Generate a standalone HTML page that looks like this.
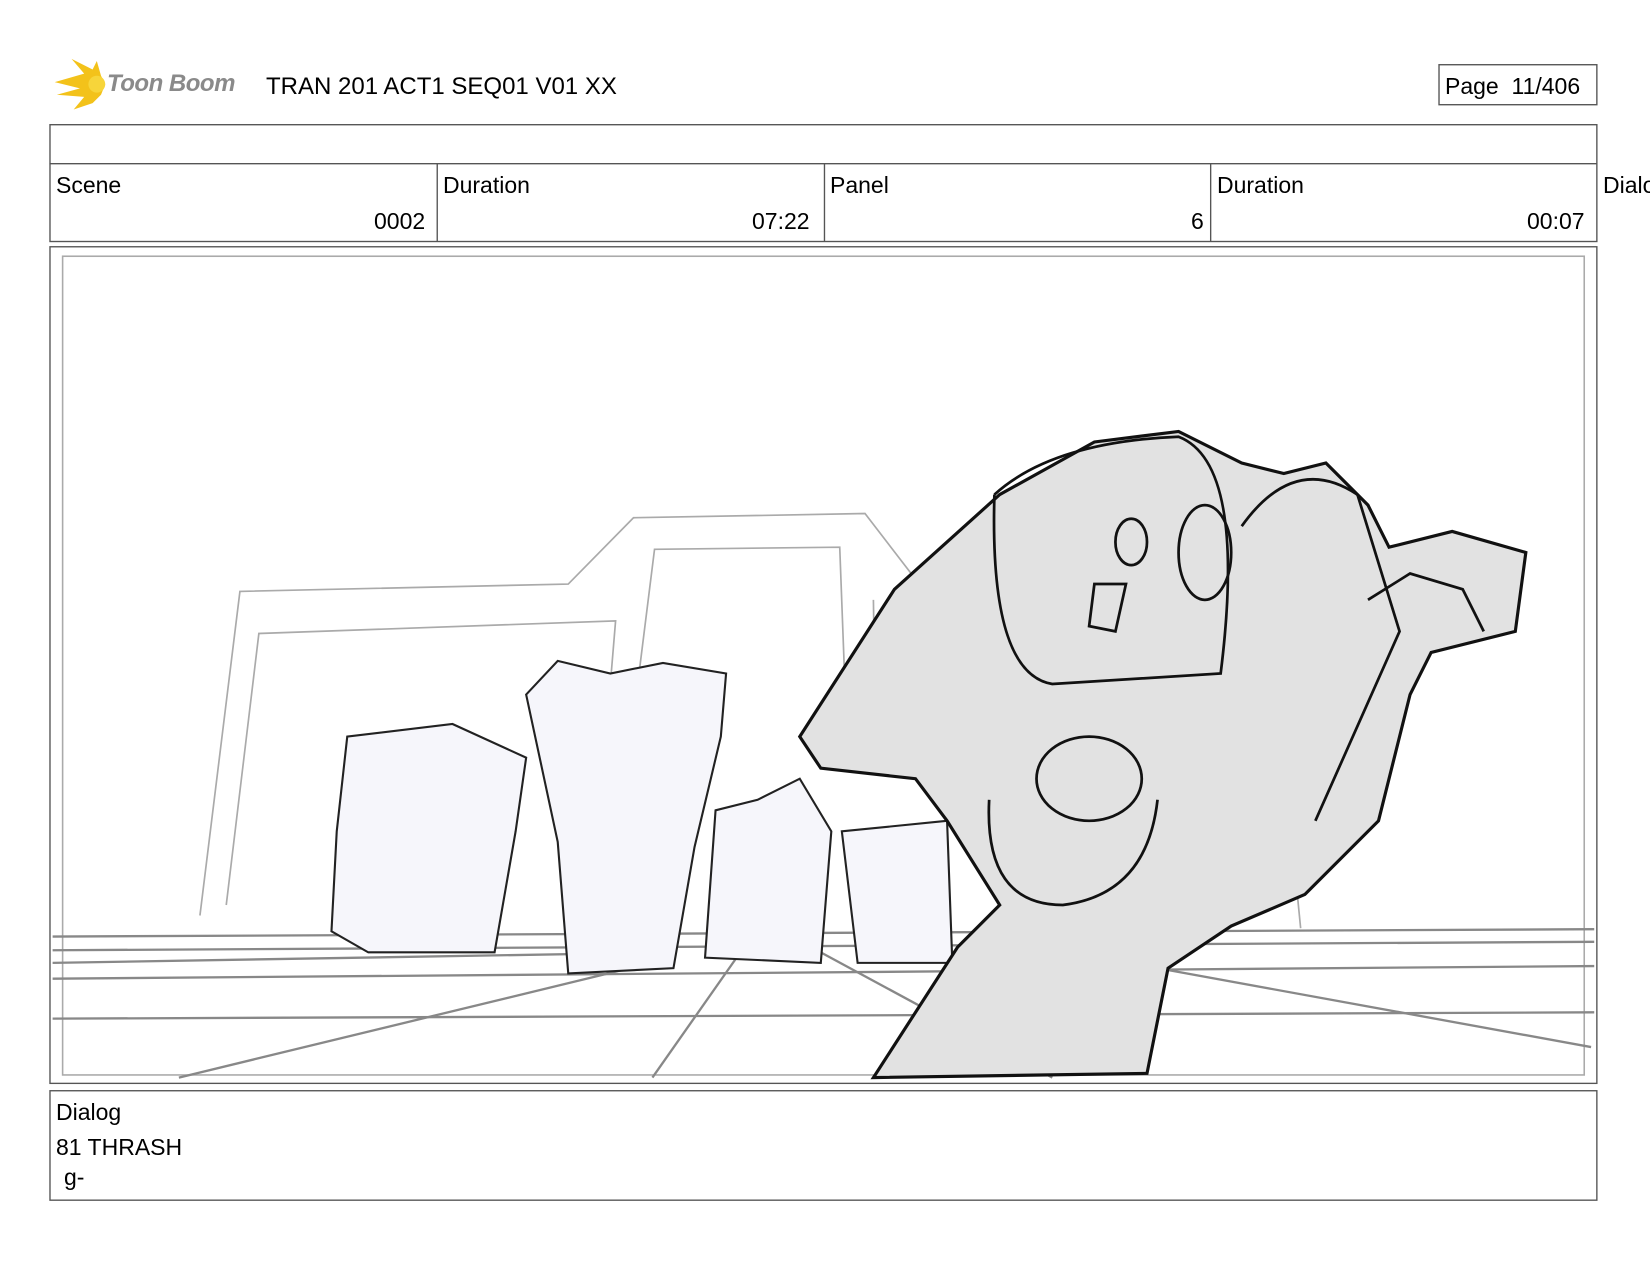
<!DOCTYPE html>
<html><head><meta charset="utf-8"><style>
html,body{margin:0;padding:0;background:#fff;}
body{width:1650px;height:1275px;position:relative;overflow:hidden;font-family:"Liberation Sans","DejaVu Sans",sans-serif;color:#000;}
.t{position:absolute;font-size:23px;white-space:nowrap;line-height:1;}
.box{position:absolute;border:1.5px solid #555;box-sizing:border-box;}
</style></head><body>
<svg style="position:absolute;left:0;top:0" width="1650" height="1275" viewBox="0 0 1568 1211.6" preserveAspectRatio="none">
 <!-- logo burst -->
 <g fill="#f3c21a">
  <path d="M52 78 L80 70 L68 56 L88 66 L92 58 L96 72 L100 80 L96 90 L88 98 L70 104 L80 92 L54 90 L76 84 Z"/>
 </g>
 <circle cx="92" cy="80" r="8" fill="#f7d53a"/>
 <!-- header table -->
 <rect x="47.5" y="118.5" width="1470" height="111" fill="none" stroke="#555" stroke-width="1.3"/>
 <line x1="47" y1="155.5" x2="1518" y2="155.5" stroke="#555" stroke-width="1.3"/>
 <line x1="415.5" y1="155" x2="415.5" y2="229" stroke="#555" stroke-width="1.3"/>
 <line x1="783.5" y1="155" x2="783.5" y2="229" stroke="#555" stroke-width="1.3"/>
 <line x1="1150.5" y1="155" x2="1150.5" y2="229" stroke="#555" stroke-width="1.3"/>
 <rect x="1367.5" y="61.5" width="150" height="38" fill="none" stroke="#555" stroke-width="1.3"/>
 <!-- panel -->
 <rect x="47.5" y="234.5" width="1470" height="795" fill="none" stroke="#555" stroke-width="1.3"/>
 <rect x="59.5" y="243.5" width="1446" height="778" fill="none" stroke="#aaa" stroke-width="1.5"/>
 <rect x="47.5" y="1036.5" width="1470" height="104" fill="none" stroke="#555" stroke-width="1.3"/>
 <!-- background set -->
 <g fill="none" stroke="#aaa" stroke-width="1.6">
  <path d="M190 870 L228 562 L540 555 L602 492 L822 488 L872 553 L1000 550"/>
  <path d="M215 860 L246 602 L585 590 L580 650"/>
  <path d="M606 650 L622 522 L798 520 L804 680"/>
  <path d="M830 570 L832 700"/>
  <path d="M1225 770 L1236 882"/>
 </g>
 <!-- floor -->
 <g stroke="#888" stroke-width="2.2" fill="none">
  <line x1="50" y1="890" x2="1515" y2="883"/>
  <line x1="50" y1="903" x2="1515" y2="895"/>
  <line x1="50" y1="930" x2="1515" y2="918"/>
  <line x1="50" y1="968" x2="1515" y2="962"/>
  <line x1="170" y1="1024" x2="640" y2="910"/>
  <line x1="620" y1="1024" x2="700" y2="910"/>
  <line x1="780" y1="905" x2="1000" y2="1024"/>
  <line x1="1100" y1="920" x2="1512" y2="995"/>
  <line x1="50" y1="915" x2="640" y2="905"/>
 </g>
 <!-- robots group -->
 <g fill="#f6f6fb" stroke="#222" stroke-width="2">
  <path d="M320 790 L330 700 L430 688 L500 720 L490 790 L470 905 L350 905 L315 885 Z"/>
  <path d="M500 660 L530 628 L580 640 L630 630 L690 640 L685 700 L660 805 L640 920 L540 925 L530 800 Z"/>
  <path d="M680 770 L720 760 L760 740 L790 790 L780 915 L670 910 Z"/>
  <path d="M800 790 L900 780 L905 915 L815 915 Z"/>
 </g>
 <!-- big robot -->
 <path d="M760 700 L850 560 L950 470 L1040 420 L1120 410 L1180 440 L1220 450 L1260 440 L1300 480 L1320 520 L1380 505 L1450 525 L1440 600 L1360 620 L1340 660 L1310 780 L1240 850 L1170 880 L1110 920 L1090 1020 L830 1024 L910 900 L950 860 L900 780 L870 740 L780 730 Z" fill="#e2e2e2" stroke="#111" stroke-width="3"/>
 <g fill="none" stroke="#111" stroke-width="2.6">
  <path d="M945 470 Q1000 420 1120 415 Q1185 440 1160 640 L1000 650 Q940 640 945 470"/>
  <ellipse cx="1035" cy="740" rx="50" ry="40"/>
  <ellipse cx="1145" cy="525" rx="25" ry="45"/>
  <path d="M940 760 Q935 860 1010 860 Q1090 850 1100 760"/>
  <path d="M1180 500 Q1230 430 1290 470 L1330 600 L1250 780"/>
  <path d="M1300 570 L1340 545 L1390 560 L1410 600"/>
  <ellipse cx="1075" cy="515" rx="15" ry="22"/>
  <path d="M1040 555 L1070 555 L1060 600 L1035 595 Z"/>
 </g>
</svg>
<div class="t" style="left:107px;top:72px;font-size:24px;font-style:italic;font-weight:bold;color:#8a8a8a;letter-spacing:-0.5px">Toon Boom</div>
<div class="t" style="left:266px;top:75px;font-size:24px">TRAN 201 ACT1 SEQ01 V01 XX</div>
<div class="t" style="left:1445px;top:75px;font-size:23px">Page&nbsp; 11/406</div>
<div class="t" style="left:56px;top:174px">Scene</div>
<div class="t" style="left:374px;top:210px">0002</div>
<div class="t" style="left:443px;top:174px">Duration</div>
<div class="t" style="left:752px;top:210px">07:22</div>
<div class="t" style="left:830px;top:174px">Panel</div>
<div class="t" style="left:1191px;top:210px">6</div>
<div class="t" style="left:1217px;top:174px">Duration</div>
<div class="t" style="left:1527px;top:210px">00:07</div>
<div class="t" style="left:1603px;top:174px">Dialog</div>
<div class="t" style="left:56px;top:1101px">Dialog</div>
<div class="t" style="left:56px;top:1136px">81 THRASH</div>
<div class="t" style="left:64px;top:1166px">g-</div>
</body></html>
